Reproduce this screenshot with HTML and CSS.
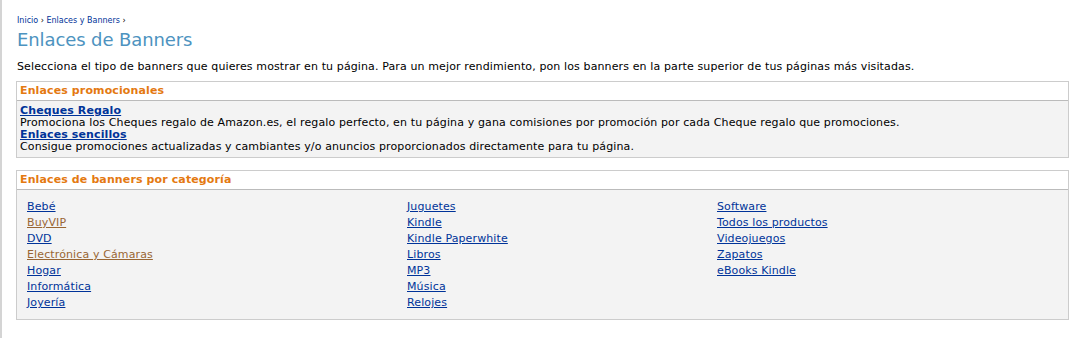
FILE: index.html
```html
<!DOCTYPE html>
<html lang="es">
<head>
<meta charset="utf-8">
<title>Enlaces de Banners</title>
<link rel="stylesheet" href="styles.css">
</head>
<body>
<div class="page">
  <div class="crumbs"><a href="#">Inicio</a> › <a href="#">Enlaces y Banners</a> ›</div>
  <h1 class="title">Enlaces de Banners</h1>
  <p class="intro">Selecciona el tipo de banners que quieres mostrar en tu página. Para un mejor rendimiento, pon los banners en la parte superior de tus páginas más visitadas.</p>

  <div class="box">
    <div class="box-head">Enlaces promocionales</div>
    <div class="box-body promo">
      <a class="strong" href="#">Cheques Regalo</a>
      <div>Promociona los Cheques regalo de Amazon.es, el regalo perfecto, en tu página y gana comisiones por promoción por cada Cheque regalo que promociones.</div>
      <a class="strong" href="#">Enlaces sencillos</a>
      <div>Consigue promociones actualizadas y cambiantes y/o anuncios proporcionados directamente para tu página.</div>
    </div>
  </div>

  <div class="box cat-box">
    <div class="box-head">Enlaces de banners por categoría</div>
    <div class="box-body cats">
      <ul class="col c1">
        <li><a href="#">Bebé</a></li>
        <li><a class="visited" href="#">BuyVIP</a></li>
        <li><a href="#">DVD</a></li>
        <li><a class="visited" href="#">Electrónica y Cámaras</a></li>
        <li><a href="#">Hogar</a></li>
        <li><a href="#">Informática</a></li>
        <li><a href="#">Joyería</a></li>
      </ul>
      <ul class="col c2">
        <li><a href="#">Juguetes</a></li>
        <li><a href="#">Kindle</a></li>
        <li><a href="#">Kindle Paperwhite</a></li>
        <li><a href="#">Libros</a></li>
        <li><a href="#">MP3</a></li>
        <li><a href="#">Música</a></li>
        <li><a href="#">Relojes</a></li>
      </ul>
      <ul class="col c3">
        <li><a href="#">Software</a></li>
        <li><a href="#">Todos los productos</a></li>
        <li><a href="#">Videojuegos</a></li>
        <li><a href="#">Zapatos</a></li>
        <li><a href="#">eBooks Kindle</a></li>
      </ul>
    </div>
  </div>
</div>
</body>
</html>
```

FILE: styles.css
```css
html, body {
  margin: 0;
  padding: 0;
  background: #fff;
  height: 100%;
}
body {
  font-family: "DejaVu Sans", Verdana, sans-serif;
  font-size: 11px;
  color: #000;
  letter-spacing: 0.12px;
}
.page {
  box-sizing: border-box;
  min-height: 100%;
  border-left: 2px solid #d4d4d4;
  padding: 15px 10px 0 14px;
}
a {
  color: #003399;
}
a.visited {
  color: #996633;
}
.crumbs {
  font-size: 8px;
  line-height: 12px;
  letter-spacing: 0;
  padding-left: 1px;
}
.crumbs a {
  text-decoration: none;
}
.title {
  margin: 2px 0 0;
  padding-left: 1px;
  font-size: 18px;
  font-weight: normal;
  color: #4d93c0;
  line-height: 22px;
  letter-spacing: -0.1px;
}
.intro {
  margin: 9px 0 0;
  padding-left: 1px;
  line-height: 14px;
}
.box {
  border: 1px solid #cccccc;
  margin-top: 7px;
}
.box-head {
  background: #fff;
  color: #e47911;
  font-weight: bold;
  line-height: 18px;
  padding: 0 3px;
  border-bottom: 1px solid #bbbbbb;
}
.box-body {
  background: #f3f3f3;
}
.promo {
  padding: 4px 4px 4px 3px;
  line-height: 12px;
}
.promo a.strong {
  font-weight: bold;
}
.cat-box {
  margin-top: 12px;
}
.cats {
  display: grid;
  grid-template-columns: 380px 310px 1fr;
  padding: 9px 10px 8px 10px;
}
.col {
  list-style: none;
  margin: 0;
  padding: 0;
}
.col li {
  line-height: 16px;
}
```
